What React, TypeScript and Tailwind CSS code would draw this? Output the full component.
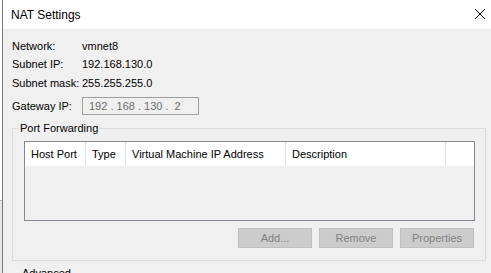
import React from "react";

const font = { fontFamily: '"Liberation Sans", Arial, sans-serif' };

function InfoRow({ label, value }: { label: string; value: string }) {
  return (
    <div className="flex h-[18px] items-center">
      <span className="w-[70px]">{label}</span>
      <span>{value}</span>
    </div>
  );
}

function DisabledButton({ children }: { children: React.ReactNode }) {
  return (
    <div className="flex h-[20px] w-[74px] items-center justify-center border border-[#bfbfbf] bg-[#cccccc] text-[#838383]">
      {children}
    </div>
  );
}

export default function App() {
  const columns = [
    { name: "Host Port", w: "w-[60px]" },
    { name: "Type", w: "w-[39px]" },
    { name: "Virtual Machine IP Address", w: "w-[159px]" },
    { name: "Description", w: "w-[159px]" },
  ];

  return (
    <div
      className="flex h-[273px] w-[491px] overflow-hidden bg-[#f0f0f0] text-[11px] text-black"
      style={font}
    >
      {/* window behind the dialog */}
      <div className="flex w-[2px] flex-col">
        <div className="h-[200px] bg-white" />
        <div className="h-px bg-[#b8b8b8]" />
        <div className="flex-1 bg-[#e6e6e6]" />
      </div>
      <div className="w-px bg-[#7a7a7a]" />

      {/* dialog */}
      <div className="flex flex-1 flex-col">
        {/* title bar */}
        <div className="flex h-[29px] shrink-0 items-center justify-between bg-white pl-[8px] pr-[5px]">
          <span className="text-[12px] leading-none">NAT Settings</span>
          <svg width="12" height="12" viewBox="0 0 12 12" className="mb-[1px]">
            <path d="M1 1 L11 11 M11 1 L1 11" stroke="#000" strokeWidth="1" />
          </svg>
        </div>

        <div className="flex flex-col pl-[9px] pt-[8px]">
          <InfoRow label="Network:" value="vmnet8" />
          <InfoRow label="Subnet IP:" value="192.168.130.0" />
          <div className="mt-px">
            <InfoRow label="Subnet mask:" value="255.255.255.0" />
          </div>
          <div className="mt-[5px] flex h-[18px] items-center">
            <span className="w-[70px]">Gateway IP:</span>
            <div className="flex h-[18px] w-[117px] items-center whitespace-pre border border-[#a0a0a0] pl-[6px] text-[#6d6d6d]">
              {"192 . 168 . 130 .  2"}
            </div>
          </div>

          {/* Port Forwarding group */}
          <div className="relative mt-[13px] h-[133px] w-[474px] border border-[#dcdcdc] pl-[11px] pt-[12px]">
            <span className="absolute left-[6px] top-[-8px] bg-[#f0f0f0] px-px leading-[14px]">
              Port Forwarding
            </span>
            <div className="flex h-[80px] w-[451px] flex-col border border-[#828790]">
              <div className="flex h-[24px] bg-white">
                {columns.map((c) => (
                  <div key={c.name} className="flex">
                    <div className={`${c.w} flex items-center pl-[6px]`}>{c.name}</div>
                    <div className="w-px bg-[#e5e5e5]" />
                  </div>
                ))}
                <div className="flex-1" />
              </div>
              <div className="flex-1" />
            </div>
            <div className="mt-[7px] flex w-[450px] justify-end gap-[7px]">
              <DisabledButton>Add...</DisabledButton>
              <DisabledButton>Remove</DisabledButton>
              <DisabledButton>Properties</DisabledButton>
            </div>
          </div>

          <div className="ml-[10px] mt-[5px] leading-[14px]">Advanced</div>
        </div>
      </div>
    </div>
  );
}
